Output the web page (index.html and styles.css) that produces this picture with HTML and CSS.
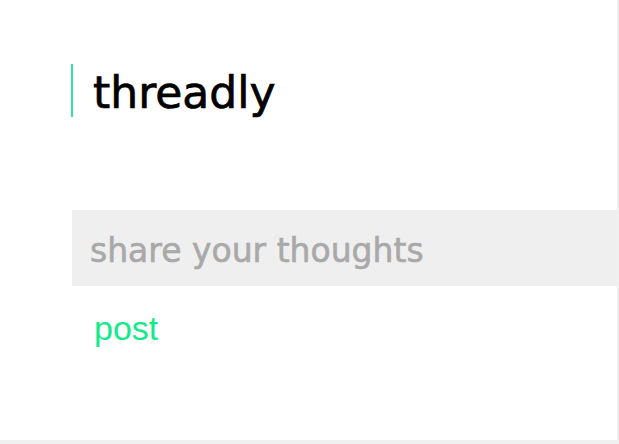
FILE: index.html
```html
<!DOCTYPE html>
<html>
<head>
<meta charset="utf-8">
<link rel="stylesheet" href="styles.css">
</head>
<body>
<div class="page">
  <header class="brand">
    <h1 class="brand-title">threadly</h1>
  </header>
  <form class="composer">
    <input class="composer-input" type="text" placeholder="share your thoughts">
    <button class="composer-post" type="button">post</button>
  </form>
</div>
</body>
</html>
```

FILE: styles.css
```css
html, body {
  margin: 0;
  padding: 0;
  background: #f0f0f0;
}
.page {
  width: 617px;
  height: 440px;
  background: #ffffff;
  overflow: hidden;
}
.brand {
  margin: 64px 0 0 71px;
  height: 53px;
  border-left: 2px solid #2ee3a2;
  padding-left: 20px;
  display: flex;
  align-items: center;
}
.brand-title {
  margin: 0;
  font-family: "DejaVu Sans", sans-serif;
  font-weight: normal;
  font-size: 44px;
  line-height: 53px;
  color: #000;
  padding-top: 3px;
  -webkit-text-stroke: 0.7px #000;
}
.composer {
  margin: 93px 0 0 72px;
  display: flex;
  flex-direction: column;
  align-items: flex-start;
}
.composer-input {
  box-sizing: border-box;
  width: 545px;
  height: 76px;
  border: none;
  outline: none;
  background: #efefef;
  padding: 4px 0 0 18px;
  font-family: "DejaVu Sans", sans-serif;
  font-size: 33px;
  color: #555;
  -webkit-text-stroke: 0.6px #a9a9a9;
}
.composer-input::placeholder {
  color: #a9a9a9;
  opacity: 1;
}
.composer-post {
  margin: 23px 0 0 22px;
  padding: 0;
  border: none;
  background: none;
  font-family: "Liberation Sans", Arial, sans-serif;
  font-size: 34px;
  line-height: 38px;
  color: #14ea8a;
  cursor: pointer;
}
```
